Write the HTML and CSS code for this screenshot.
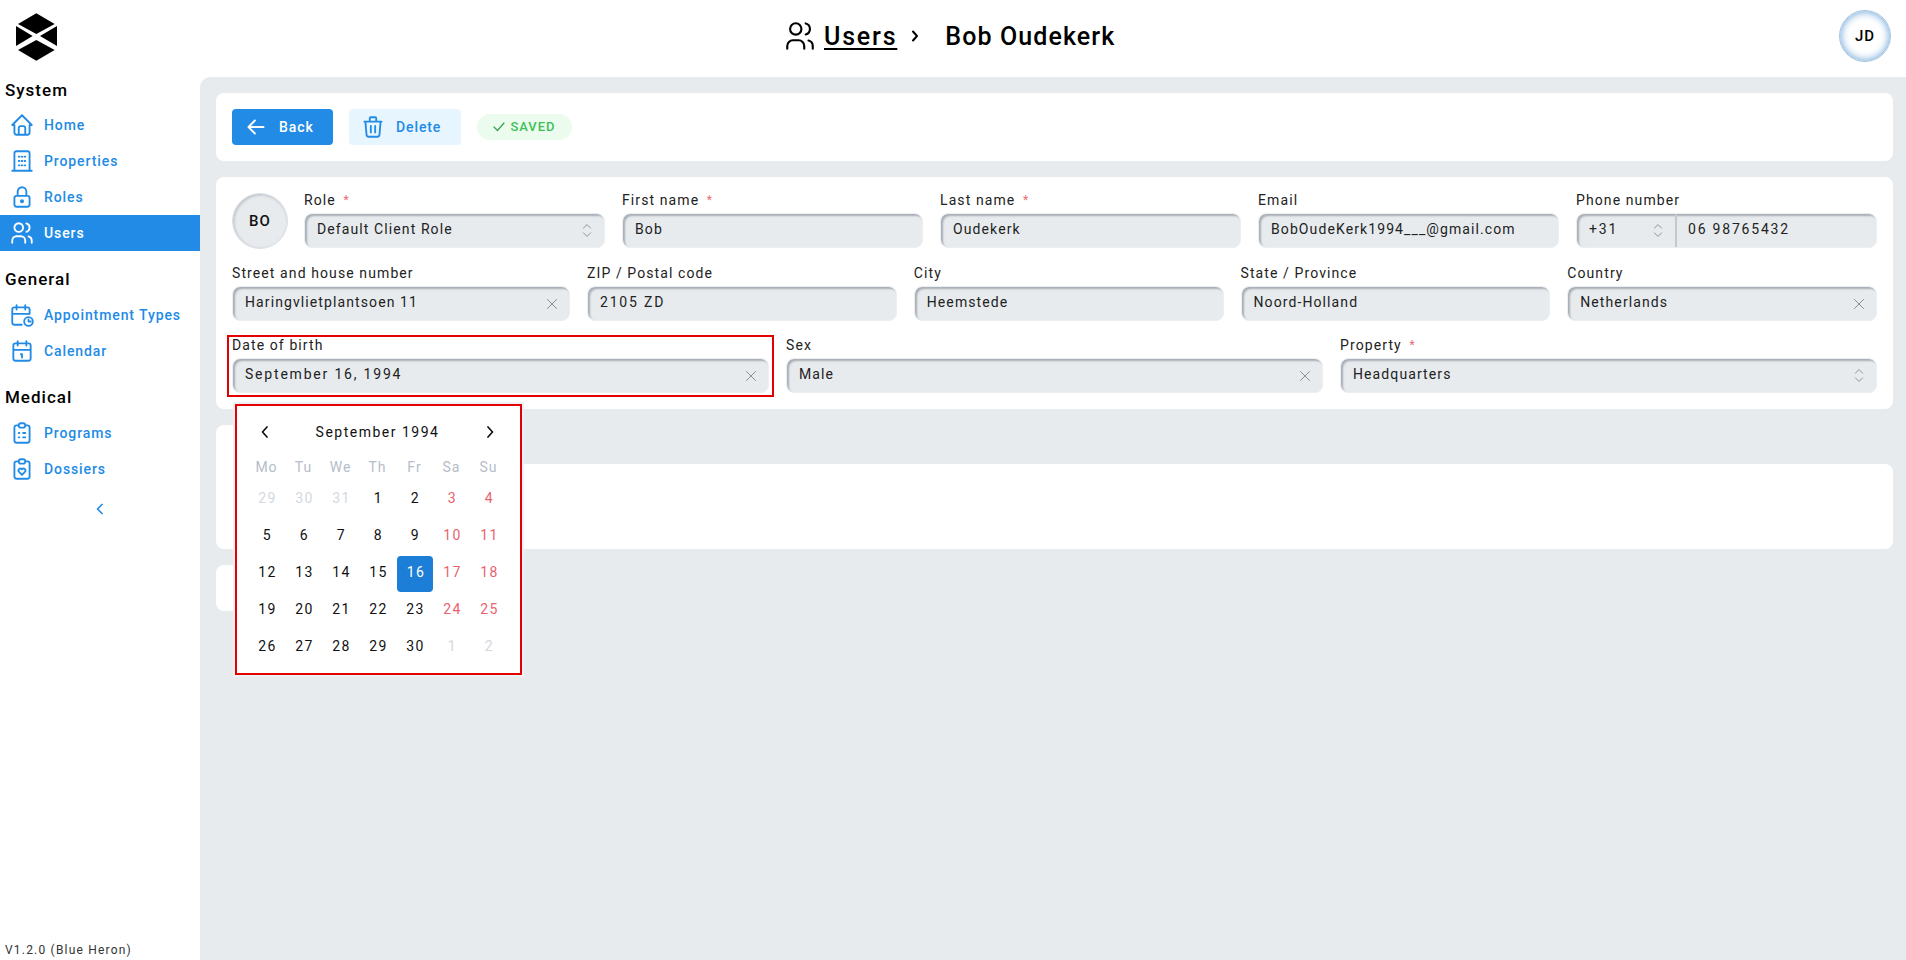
FILE: index.html
```html
<!DOCTYPE html>
<html lang="en">
<head>
    <meta charset="UTF-8">
    <title>Users - Bob Oudekerk</title>
    <link rel="stylesheet" href="styles.css">
</head>
<body>
    <aside class="sidebar">
        <div class="logo">
            <svg width="41" height="48" viewBox="0 0 123 142"><path d="M61 0 116 32 61 62 6 32Z M0 38 50 68 0 98Z M123 38 72 68 123 98Z M61 80 116 110 61 142 6 110Z" fill="#000"/></svg>
        </div>
        <h2 class="nav-title">System</h2>
        <a class="nav-item"><svg class="ico" viewBox="0 0 24 24"><path d="M5 12H3l9-9 9 9h-2M5 12v7a2 2 0 0 0 2 2h10a2 2 0 0 0 2-2v-7M9 21v-6a2 2 0 0 1 2-2h2a2 2 0 0 1 2 2v6"/></svg>Home</a>
        <a class="nav-item"><svg class="ico" viewBox="0 0 24 24"><path d="M3 21h18M5 21V5a2 2 0 0 1 2-2h10a2 2 0 0 1 2 2v16M9 8h.6M11.700 8h.6M14.400 8h.6M9 12h.6M11.700 12h.6M14.400 12h.6M9 16h.6M11.700 16h.6M14.400 16h.6"/></svg>Properties</a>
        <a class="nav-item"><svg class="ico" viewBox="0 0 24 24"><path d="M5 13a2 2 0 0 1 2-2h10a2 2 0 0 1 2 2v6a2 2 0 0 1-2 2H7a2 2 0 0 1-2-2zM11 16a1 1 0 1 0 2 0a1 1 0 0 0-2 0M8 11V7a4 4 0 1 1 8 0v4"/></svg>Roles</a>
        <a class="nav-item active"><svg class="ico" viewBox="0 0 24 24"><path d="M5 7a4 4 0 1 0 8 0a4 4 0 1 0-8 0M3 21v-2a4 4 0 0 1 4-4h4a4 4 0 0 1 4 4v2M16 3.130a4 4 0 0 1 0 7.750M21 21v-2a4 4 0 0 0-3-3.850"/></svg>Users</a>
        <h2 class="nav-title second">General</h2>
        <a class="nav-item"><svg class="ico" viewBox="0 0 24 24"><path d="M11.800 21H5a2 2 0 0 1-2-2V7a2 2 0 0 1 2-2h12a2 2 0 0 1 2 2v4M15 3v4M7 3v4M3 11h16M14 18a4 4 0 1 0 8 0a4 4 0 1 0-8 0M18 16v2h2"/></svg>Appointment Types</a>
        <a class="nav-item"><svg class="ico" viewBox="0 0 24 24"><path d="M4 7a2 2 0 0 1 2-2h12a2 2 0 0 1 2 2v12a2 2 0 0 1-2 2H6a2 2 0 0 1-2-2zM16 3v4M8 3v4M4 11h16M11 15h1M12 15v3"/></svg>Calendar</a>
        <h2 class="nav-title second">Medical</h2>
        <a class="nav-item"><svg class="ico" viewBox="0 0 24 24"><path d="M9 5H7a2 2 0 0 0-2 2v12a2 2 0 0 0 2 2h10a2 2 0 0 0 2-2V7a2 2 0 0 0-2-2h-2M9 5a2 2 0 0 1 2-2h2a2 2 0 0 1 2 2a2 2 0 0 1-2 2h-2a2 2 0 0 1-2-2zM9 12h.6M13 12h2M9 16h.6M13 16h2"/></svg>Programs</a>
        <a class="nav-item"><svg class="ico" viewBox="0 0 24 24"><path d="M9 5H7a2 2 0 0 0-2 2v12a2 2 0 0 0 2 2h10a2 2 0 0 0 2-2V7a2 2 0 0 0-2-2h-2M9 5a2 2 0 0 1 2-2h2a2 2 0 0 1 2 2a2 2 0 0 1-2 2h-2a2 2 0 0 1-2-2zM12 17.500l-2.700-2.800a1.900 1.900 0 0 1 0-2.600a1.800 1.800 0 0 1 2.500 0l.2.2.2-.2a1.800 1.800 0 0 1 2.500 0a1.900 1.900 0 0 1 0 2.600z"/></svg>Dossiers</a>
        <div class="collapse"><svg width="12" height="12" viewBox="0 0 12 12"><path d="M8 1.500 3.500 6 8 10.500"/></svg></div>
        <div class="version">V1.2.0 (Blue Heron)</div>
    </aside>

    <div class="page">
        <header class="topbar">
            <svg class="crumb-ico" viewBox="0 0 24 24"><path d="M5 7a4 4 0 1 0 8 0a4 4 0 1 0-8 0M3 21v-2a4 4 0 0 1 4-4h4a4 4 0 0 1 4 4v2M16 3.130a4 4 0 0 1 0 7.750M21 21v-2a4 4 0 0 0-3-3.850"/></svg>
            <a class="crumb-link">Users</a>
            <svg class="crumb-sep" width="8" height="12" viewBox="0 0 8 12"><path d="M2 1.500 6 6 2 10.500"/></svg>
            <span>Bob Oudekerk</span>
            <div class="avatar-user">JD</div>
        </header>

        <main class="content">
            <section class="card toolbar">
                <button class="btn btn-primary"><svg width="26" height="26" viewBox="0 0 24 24"><path d="M5 12h14M5 12l6 6M5 12l6-6"/></svg>Back</button>
                <button class="btn btn-light"><svg width="26" height="26" viewBox="0 0 24 24"><path d="M4 7h16M10 11v6M14 11v6M5 7l1 12a2 2 0 0 0 2 2h8a2 2 0 0 0 2-2l1-12M9 7V4a1 1 0 0 1 1-1h4a1 1 0 0 1 1 1v3"/></svg>Delete</button>
                <span class="saved"><svg width="12" height="12" viewBox="0 0 12 12"><path d="M1 7l3.500 3.500L11 3"/></svg>SAVED</span>
            </section>

            <section class="card form">
                <div class="row-first">
                    <div class="avatar-big">BO</div>
                    <label class="field"><span class="lbl">Role <i>*</i></span><span class="input">Default Client Role<svg class="updown" viewBox="0 0 10 16"><path d="M2 6l3-3 3 3M2 10l3 3 3-3"/></svg></span></label>
                    <label class="field"><span class="lbl">First name <i>*</i></span><span class="input">Bob</span></label>
                    <label class="field"><span class="lbl">Last name <i>*</i></span><span class="input">Oudekerk</span></label>
                    <label class="field"><span class="lbl">Email</span><span class="input">BobOudeKerk1994___@gmail.com</span></label>
                    <label class="field"><span class="lbl">Phone number</span>
                        <span class="input phone"><span class="code digits">+31<svg class="updown" viewBox="0 0 10 16"><path d="M2 6l3-3 3 3M2 10l3 3 3-3"/></svg></span><span class="num digits">06 98765432</span></span>
                    </label>
                </div>
                <div class="row-second">
                    <label class="field"><span class="lbl">Street and house number</span><span class="input">Haringvlietplantsoen 11<svg class="clear" viewBox="0 0 12 12"><path d="M1.500 1.500l9 9M10.500 1.500l-9 9"/></svg></span></label>
                    <label class="field"><span class="lbl">ZIP / Postal code</span><span class="input digits">2105 ZD</span></label>
                    <label class="field"><span class="lbl">City</span><span class="input">Heemstede</span></label>
                    <label class="field"><span class="lbl">State / Province</span><span class="input">Noord-Holland</span></label>
                    <label class="field"><span class="lbl">Country</span><span class="input">Netherlands<svg class="clear" viewBox="0 0 12 12"><path d="M1.500 1.500l9 9M10.500 1.500l-9 9"/></svg></span></label>
                </div>
                <div class="row-third">
                    <div class="field">
                        <span class="lbl">Date of birth</span>
                        <span class="input digits">September 16, 1994<svg class="clear" viewBox="0 0 12 12"><path d="M1.500 1.500l9 9M10.500 1.500l-9 9"/></svg></span>
                        <span class="mark-dob"></span>
                        <div class="calendar">
                            <div class="cal-head">
                                <svg width="12" height="14" viewBox="0 0 12 14"><path d="M8 2 3.500 7 8 12"/></svg>
                                <span>September 1994</span>
                                <svg width="12" height="14" viewBox="0 0 12 14"><path d="M4 2l4.500 5L4 12"/></svg>
                            </div>
                            <div class="cal-grid">
                                <span class="dow">Mo</span><span class="dow">Tu</span><span class="dow">We</span><span class="dow">Th</span><span class="dow">Fr</span><span class="dow">Sa</span><span class="dow">Su</span>
                                <span class="off">29</span><span class="off">30</span><span class="off">31</span><span>1</span><span>2</span><span class="we">3</span><span class="we">4</span>
                                <span>5</span><span>6</span><span>7</span><span>8</span><span>9</span><span class="we">10</span><span class="we">11</span>
                                <span>12</span><span>13</span><span>14</span><span>15</span><span class="sel">16</span><span class="we">17</span><span class="we">18</span>
                                <span>19</span><span>20</span><span>21</span><span>22</span><span>23</span><span class="we">24</span><span class="we">25</span>
                                <span>26</span><span>27</span><span>28</span><span>29</span><span>30</span><span class="off">1</span><span class="off">2</span>
                            </div>
                        </div>
                    </div>
                    <label class="field"><span class="lbl">Sex</span><span class="input">Male<svg class="clear" viewBox="0 0 12 12"><path d="M1.500 1.500l9 9M10.500 1.500l-9 9"/></svg></span></label>
                    <label class="field"><span class="lbl">Property <i>*</i></span><span class="input">Headquarters<svg class="updown" viewBox="0 0 10 16"><path d="M2 6l3-3 3 3M2 10l3 3 3-3"/></svg></span></label>
                </div>
            </section>

            <div class="tab"></div>
            <section class="card empty"></section>
            <section class="card stub"></section>
        </main>
    </div>
</body>
</html>
```

FILE: styles.css
```css
* {
    box-sizing: border-box;
}
body {
    font-family: Roboto, sans-serif;
    margin: 0;
    height: 960px;
    overflow: hidden;
    display: flex;
    background-color: #fff;
    color: #111;
    letter-spacing: 1.1px;
}
svg {
    fill: none;
    stroke: currentColor;
    stroke-width: 1.7;
    stroke-linecap: round;
    stroke-linejoin: round;
}
.sidebar {
    width: 200px;
    height: 960px;
    flex-shrink: 0;
    display: flex;
    flex-direction: column;
}
.logo {
    height: 72px;
    padding: 13px 0 0 16px;
}
.logo svg {
    stroke: none;
    display: block;
}
.nav-title {
    font-size: 17px;
    font-weight: 500;
    letter-spacing: 1px;
    margin: 8px 0 7px 5px;
    line-height: 20px;
    color: #000;
}
.nav-title.second {
    margin: 18px 0 8px 5px;
}
.nav-item {
    height: 36px;
    display: flex;
    align-items: center;
    gap: 9px;
    padding-left: 9px;
    font-size: 14px;
    font-weight: 500;
    letter-spacing: 0.9px;
    color: #228be6;
}
.nav-item.active {
    background-color: #228be6;
    color: #fff;
}
.ico {
    width: 26px;
    height: 26px;
}
.collapse {
    margin-top: 16px;
    height: 12px;
    text-align: center;
    color: #228be6;
}
.collapse svg {
    display: block;
    margin: 0 auto;
}
.version {
    margin-top: auto;
    padding: 0 0 3px 5px;
    font-size: 12px;
    line-height: 14px;
    letter-spacing: 1.2px;
    color: #333;
}
.page {
    flex: 1;
    display: flex;
    flex-direction: column;
    min-width: 0;
}
.topbar {
    height: 77px;
    flex-shrink: 0;
    position: relative;
    display: flex;
    align-items: center;
    padding: 0 0 5px 583px;
    font-size: 25px;
    font-weight: 500;
    letter-spacing: 1.1px;
    color: #000;
}
.crumb-ico {
    width: 34px;
    height: 34px;
    margin-right: 7px;
    stroke-width: 1.5;
}
.crumb-link {
    text-decoration: underline;
    text-underline-offset: 3px;
    letter-spacing: 1.8px;
}
.crumb-sep {
    margin: 0 26px 0 14px;
    stroke-width: 2;
    flex-shrink: 0;
}
.avatar-user {
    position: absolute;
    right: 15px;
    top: 10px;
    width: 52px;
    height: 52px;
    border-radius: 50%;
    display: flex;
    align-items: center;
    justify-content: center;
    font-size: 15px;
    font-weight: 500;
    letter-spacing: 1px;
    border: 1px solid #a9c4de;
    box-shadow: inset 0 0 8px #5b9bd5;
}
.content {
    flex: 1;
    background-color: #e7ebee;
    border-top-left-radius: 10px;
    padding: 16px 13px 0 16px;
    display: flex;
    flex-direction: column;
    align-items: stretch;
}
.card {
    background-color: #fff;
    border-radius: 8px;
}
.toolbar {
    height: 68px;
    display: flex;
    align-items: center;
    gap: 16px;
    padding-left: 16px;
}
.btn {
    height: 36px;
    border: none;
    border-radius: 4px;
    display: flex;
    align-items: center;
    gap: 10px;
    font-family: inherit;
    font-size: 14px;
    font-weight: 500;
    letter-spacing: 0.9px;
    padding: 0 0 0 11px;
}
.btn-primary {
    background-color: #228be6;
    color: #fff;
    width: 101px;
}
.btn-light {
    background-color: #e7f5ff;
    color: #228be6;
    width: 112px;
}
.saved {
    height: 26px;
    width: 95px;
    border-radius: 13px;
    background-color: #ebfbee;
    color: #40c057;
    font-size: 13px;
    font-weight: 500;
    letter-spacing: 1px;
    display: flex;
    align-items: center;
    justify-content: center;
    gap: 5px;
    padding-bottom: 2px;
}
.saved svg {
    stroke-width: 1.2;
    color: #37a24b;
}
.form {
    margin-top: 16px;
    height: 232px;
    padding: 16px 16px 0;
}
.row-first {
    display: flex;
    gap: 17px;
}
.row-first .field {
    flex: 1 1 0;
    min-width: 0;
}
.row-second {
    margin-top: 17px;
    display: grid;
    grid-template-columns: 338px repeat(4, 1fr);
    gap: 17px;
}
.row-third {
    margin-top: 17px;
    display: grid;
    grid-template-columns: repeat(3, 1fr);
    gap: 17px;
}
.avatar-big {
    width: 56px;
    height: 56px;
    margin-right: -1px;
    border-radius: 50%;
    background-color: #e7ebee;
    border: 1px solid #dde1e5;
    box-shadow: inset 1px 1px 3px #b4bac2;
    display: flex;
    align-items: center;
    justify-content: center;
    font-size: 15px;
    font-weight: 500;
    letter-spacing: 1px;
    flex-shrink: 0;
}
.field {
    position: relative;
    display: block;
    min-width: 0;
}
.lbl {
    display: block;
    font-size: 14px;
    line-height: 14px;
    margin-bottom: 6px;
    color: #222;
}
.lbl i {
    color: #e86c6c;
    font-size: 12px;
    font-style: normal;
    margin-left: 3px;
    vertical-align: 1px;
}
.input {
    height: 35px;
    display: flex;
    align-items: center;
    position: relative;
    background-color: #e7ebee;
    border-radius: 8px;
    border: 1px solid #eceef1;
    box-shadow: inset 2px 2px 2px #a8aeb6;
    padding: 0 12px 3px;
    font-size: 14px;
    color: #222;
    white-space: nowrap;
}
.digits {
    letter-spacing: 1.8px;
}
.updown {
    position: absolute;
    right: 11px;
    top: 7px;
    width: 12px;
    height: 19px;
    stroke: #868e96;
    stroke-width: 0.8;
}
.clear {
    position: absolute;
    right: 11px;
    top: 11px;
    width: 12px;
    height: 12px;
    stroke: #868e96;
    stroke-width: 1;
}
.phone {
    padding: 0;
}
.code {
    width: 100px;
    height: 100%;
    display: flex;
    align-items: center;
    padding: 0 0 3px 12px;
    position: relative;
    border-right: 2px solid #c3c8ce;
}
.num {
    padding: 0 0 3px 11px;
}
.mark-dob {
    position: absolute;
    left: -5px;
    right: -5px;
    top: -3px;
    bottom: -4px;
    border: 2px solid #e30000;
}
.calendar {
    position: absolute;
    left: 3px;
    top: 66px;
    width: 287px;
    height: 271px;
    background-color: #fff;
    border: 2px solid #e30000;
    outline: 2px solid #edf0f4;
    padding: 14px 0 0 11px;
    z-index: 5;
    letter-spacing: 1.5px;
}
.cal-head {
    width: 259px;
    display: flex;
    justify-content: space-between;
    align-items: center;
    padding: 0 11px;
    font-size: 14px;
    height: 24px;
    margin-bottom: 12px;
}
.cal-grid {
    display: grid;
    grid-template-columns: repeat(7, 37px);
    grid-template-rows: 25px repeat(5, 37px);
    font-size: 14px;
}
.cal-grid span {
    display: flex;
    align-items: center;
    justify-content: center;
    border-radius: 4px;
    padding: 0 0 4px 2px;
}
.cal-grid .dow {
    color: #b5bdc8;
    font-size: 14px;
    letter-spacing: 1px;
    padding: 0 0 3px;
}
.cal-grid .off {
    color: #d3d8de;
}
.cal-grid .we {
    color: #e8636e;
}
.cal-grid .sel {
    background-color: #1c7ed6;
    color: #fff;
    margin: 1px 0 0 1px;
}
.tab {
    margin-top: 16px;
    height: 39px;
    width: 300px;
    background-color: #fff;
    border-radius: 8px 8px 0 0;
}
.empty {
    height: 85px;
    border-top-left-radius: 0;
}
.stub {
    margin-top: 16px;
    width: 300px;
    height: 46px;
}
```
